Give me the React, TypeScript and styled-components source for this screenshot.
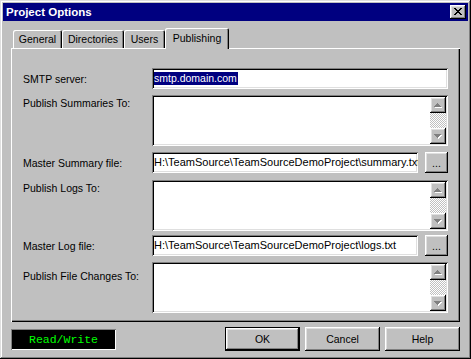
import React from "react";
import styled, { createGlobalStyle, css } from "styled-components";

const GlobalStyle = createGlobalStyle`
  html, body { margin: 0; padding: 0; background: #c0c0c0; }
  body { font-family: "Liberation Sans", Arial, sans-serif; color: #000; }
  * { box-sizing: border-box; }
`;

const raised = css`
  background: #c0c0c0;
  box-shadow: inset -1px -1px #000, inset 1px 1px #fff, inset -2px -2px #808080,
    inset 2px 2px #dfdfdf;
`;

const sunken = css`
  box-shadow: inset 1px 1px #808080, inset -1px -1px #fff, inset 2px 2px #000,
    inset -2px -2px #dfdfdf;
`;

const Window = styled.div`
  width: 471px;
  height: 359px;
  padding: 3px;
  display: flex;
  flex-direction: column;
  background: #c0c0c0;
  box-shadow: inset -1px -1px #000, inset 1px 1px #dfdfdf, inset -2px -2px #808080,
    inset 2px 2px #fff;
`;

const TitleBar = styled.div`
  height: 18px;
  flex-shrink: 0;
  background: #000080;
  display: flex;
  align-items: center;
  justify-content: space-between;
  padding: 0 2px 0 3px;
`;

const Title = styled.span`
  color: #fff;
  font-weight: bold;
  font-size: 11.5px;
  line-height: 14px;
`;

const CloseButton = styled.div`
  ${raised};
  width: 16px;
  height: 14px;
  display: flex;
  align-items: center;
  justify-content: center;
  padding-bottom: 1px;
`;

const Body = styled.div`
  flex: 1;
  display: flex;
  flex-direction: column;
  padding: 7px 8px 0;
  min-height: 0;
`;

const TabStrip = styled.div`
  display: flex;
  align-items: flex-end;
  height: 21px;
  flex-shrink: 0;
  padding-left: 2px;
  position: relative;
  z-index: 1;
`;

const Tab = styled.div<{ $w: number; $active?: boolean }>`
  width: ${(p) => p.$w}px;
  height: ${(p) => (p.$active ? 21 : 18)}px;
  margin-bottom: ${(p) => (p.$active ? 0 : 1)}px;
  padding-bottom: ${(p) => (p.$active ? 2 : 0)}px;
  background: #c0c0c0;
  border-radius: 2px 2px 0 0;
  box-shadow: inset 1px 1px #fff, inset -1px 0 #000, inset -2px 0 #808080;
  font-size: 10.5px;
  line-height: 12px;
  display: flex;
  align-items: center;
  justify-content: center;
`;

const Panel = styled.div`
  flex: 1;
  margin-top: -1px;
  position: relative;
  z-index: 0;
  box-shadow: inset 1px 1px #fff, inset -1px -1px #000, inset -2px -2px #808080;
  padding: 20px 12px 0 12px;
  display: flex;
  flex-direction: column;
`;

const Row = styled.div<{ $mt: number; $center?: boolean }>`
  display: grid;
  grid-template-columns: 129px 1fr;
  margin-top: ${(p) => p.$mt}px;
  align-items: ${(p) => (p.$center ? "center" : "start")};
`;

const Label = styled.div<{ $pt?: number }>`
  font-size: 10.5px;
  line-height: 12px;
  padding-top: ${(p) => p.$pt ?? 0}px;
  white-space: nowrap;
`;

const FieldGroup = styled.div`
  display: grid;
  grid-template-columns: 1fr 23px;
  gap: 7px;
`;

const TextField = styled.div`
  ${sunken};
  background: #fff;
  height: 21px;
  padding: 0 3px 0 2px;
  display: flex;
  align-items: center;
  font-size: 11px;
  line-height: 13px;
  white-space: nowrap;
  overflow: hidden;
`;

const Selected = styled.span`
  background: #000080;
  color: #fff;
  font-size: 10.5px;
  padding: 0 1px 0 0;
`;

const TextArea = styled.div`
  ${sunken};
  background: #fff;
  height: 51px;
  padding: 2px;
  display: flex;
  justify-content: flex-end;
`;

const ScrollBar = styled.div`
  width: 16px;
  display: flex;
  flex-direction: column;
`;

const ScrollButton = styled.div`
  ${raised};
  width: 16px;
  height: 16px;
  flex-shrink: 0;
  display: flex;
  align-items: center;
  justify-content: center;
`;

const Track = styled.div`
  flex: 1;
  background: repeating-conic-gradient(#c0c0c0 0 25%, #fff 0 50%) 0 0 / 2px 2px;
`;

const SmallButton = styled.div`
  ${raised};
  height: 21px;
  display: flex;
  align-items: flex-end;
  justify-content: center;
  padding-bottom: 5px;
  font-size: 10.5px;
  line-height: 10px;
`;

const Footer = styled.div`
  height: 34px;
  flex-shrink: 0;
  display: flex;
  align-items: center;
`;

const Status = styled.div`
  width: 105px;
  height: 21px;
  background: #000;
  box-shadow: inset 1px 1px #808080, inset -1px -1px #fff;
  color: #00ff00;
  font-family: "Liberation Mono", "Courier New", monospace;
  font-size: 11.5px;
  display: flex;
  align-items: center;
  justify-content: center;
  margin-top: 1px;
`;

const DialogButton = styled.div<{ $default?: boolean }>`
  width: 75px;
  height: 24px;
  margin-left: 5px;
  font-size: 10.5px;
  display: flex;
  align-items: center;
  justify-content: center;
  ${raised};
  ${(p) =>
    p.$default &&
    css`
      margin-left: auto;
      box-shadow: inset 0 0 0 1px #000, inset -2px -2px #000, inset 2px 2px #fff,
        inset -3px -3px #808080, inset 3px 3px #dfdfdf;
    `}
`;

const Arrow = ({ down }: { down?: boolean }) => {
  const rows = [1, 3, 5, 7];
  const list = down ? [...rows].reverse() : rows;
  const rects = (dx: number, dy: number, fill: string) =>
    list.map((w, i) => (
      <rect key={fill + i} x={(7 - w) / 2 + dx} y={i + dy} width={w} height={1} fill={fill} />
    ));
  return (
    <svg width="8" height="5" viewBox="0 0 8 5" shapeRendering="crispEdges">
      {rects(1, 1, "#fff")}
      {rects(0, 0, "#808080")}
    </svg>
  );
};

const ScrollArea = () => (
  <TextArea>
    <ScrollBar>
      <ScrollButton>
        <Arrow />
      </ScrollButton>
      <Track />
      <ScrollButton>
        <Arrow down />
      </ScrollButton>
    </ScrollBar>
  </TextArea>
);

export default function App() {
  return (
    <>
      <GlobalStyle />
      <Window>
        <TitleBar>
          <Title>Project Options</Title>
          <CloseButton>
            <svg width="8" height="7" viewBox="0 0 8 7" shapeRendering="crispEdges">
              <path d="M0 0h2v1h1v1h2v-1h1v-1h2v1h-1v1h-1v1h-1v1h1v1h1v1h1v1h-2v-1h-1v-1h-2v1h-1v1h-2v-1h1v-1h1v-1h1v-1h-1v-1h-1v-1h-1z" fill="#000" />
            </svg>
          </CloseButton>
        </TitleBar>
        <Body>
          <TabStrip>
            <Tab $w={49}>General</Tab>
            <Tab $w={62}>Directories</Tab>
            <Tab $w={41}>Users</Tab>
            <Tab $w={64} $active>
              Publishing
            </Tab>
          </TabStrip>
          <Panel>
            <Row $mt={0} $center>
              <Label>SMTP server:</Label>
              <TextField>
                <Selected>smtp.domain.com</Selected>
              </TextField>
            </Row>
            <Row $mt={6}>
              <Label $pt={2}>Publish Summaries To:</Label>
              <ScrollArea />
            </Row>
            <Row $mt={6} $center>
              <Label>Master Summary file:</Label>
              <FieldGroup>
                <TextField>H:\TeamSource\TeamSourceDemoProject\summary.txt</TextField>
                <SmallButton>...</SmallButton>
              </FieldGroup>
            </Row>
            <Row $mt={7}>
              <Label $pt={2}>Publish Logs To:</Label>
              <ScrollArea />
            </Row>
            <Row $mt={4} $center>
              <Label>Master Log file:</Label>
              <FieldGroup>
                <TextField>H:\TeamSource\TeamSourceDemoProject\logs.txt</TextField>
                <SmallButton>...</SmallButton>
              </FieldGroup>
            </Row>
            <Row $mt={6}>
              <Label $pt={8}>Publish File Changes To:</Label>
              <ScrollArea />
            </Row>
          </Panel>
          <Footer>
            <Status>Read/Write</Status>
            <DialogButton $default>OK</DialogButton>
            <DialogButton>Cancel</DialogButton>
            <DialogButton>Help</DialogButton>
          </Footer>
        </Body>
      </Window>
    </>
  );
}
